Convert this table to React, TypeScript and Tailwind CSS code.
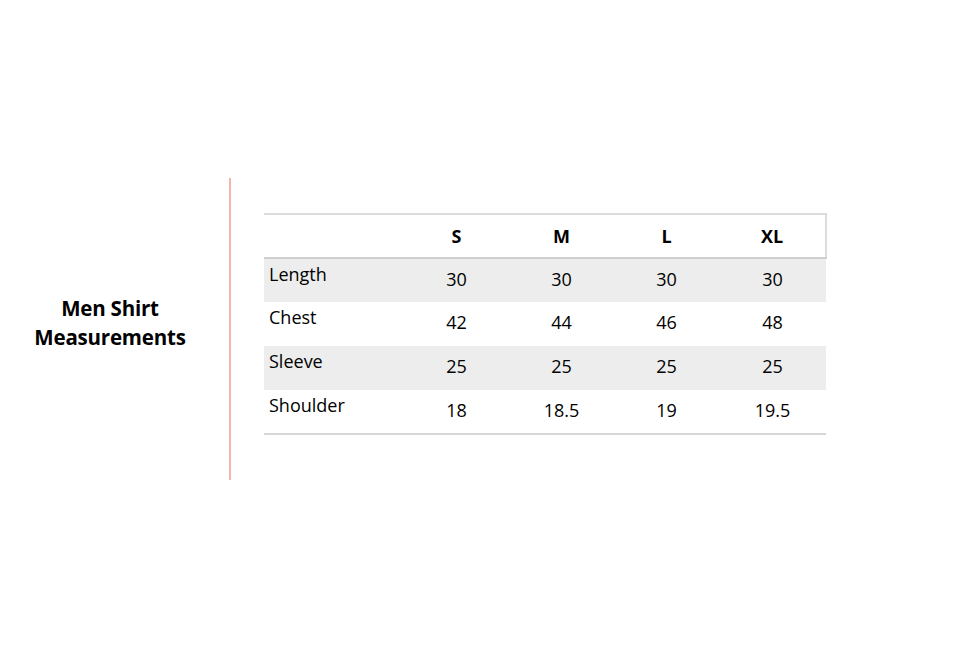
const SIZES = ['S', 'M', 'L', 'XL']

const ROWS = [
  { label: 'Length', values: ['30', '30', '30', '30'], shaded: true },
  { label: 'Chest', values: ['42', '44', '46', '48'], shaded: false },
  { label: 'Sleeve', values: ['25', '25', '25', '25'], shaded: true },
  { label: 'Shoulder', values: ['18', '18.5', '19', '19.5'], shaded: false },
]

export default function App() {
  return (
    <div
      className="w-[960px] h-[660px] bg-white text-black flex items-center"
      style={{ fontFamily: "'Open Sans', Lato, sans-serif" }}
    >
      <div className="flex items-stretch h-[302px] mt-[-2px]">
        {/* title */}
        <div className="w-[220px] mr-[9px] flex items-center justify-center pb-[12px]">
          <h1 className="text-[20.5px] leading-[29px] font-bold text-center tracking-[-0.2px]">
            Men Shirt
            <br />
            Measurements
          </h1>
        </div>

        <div className="w-[2px] bg-[#f5b5ad]" />

        {/* table */}
        <div className="pl-[33px] pt-[35px]">
          <table className="border-collapse w-[562px] table-fixed">
            <colgroup>
              <col className="w-[140px]" />
              <col className="w-[105px]" />
              <col className="w-[105px]" />
              <col className="w-[105px]" />
              <col className="w-[107px]" />
            </colgroup>
            <thead>
              <tr className="h-[44px] border-t-2 border-t-[#dcdcdc] border-b-2 border-b-[#cfcfcf] border-r-2 border-r-[#dcdcdc]">
                <th />
                {SIZES.map(s => (
                  <th key={s} className="text-[18px] font-bold text-center">
                    {s}
                  </th>
                ))}
              </tr>
            </thead>
            <tbody className="border-b-2 border-b-[#d6d6d6]">
              {ROWS.map(r => (
                <tr key={r.label} className={'h-[44px] ' + (r.shaded ? 'bg-[#ededed]' : 'bg-white')}>
                  <td className="align-top pl-[5px] pt-[2px] text-[18px]">{r.label}</td>
                  {r.values.map((v, i) => (
                    <td key={i} className="text-center text-[18px] pb-[3px]">
                      {v}
                    </td>
                  ))}
                </tr>
              ))}
            </tbody>
          </table>
        </div>
      </div>
    </div>
  )
}
